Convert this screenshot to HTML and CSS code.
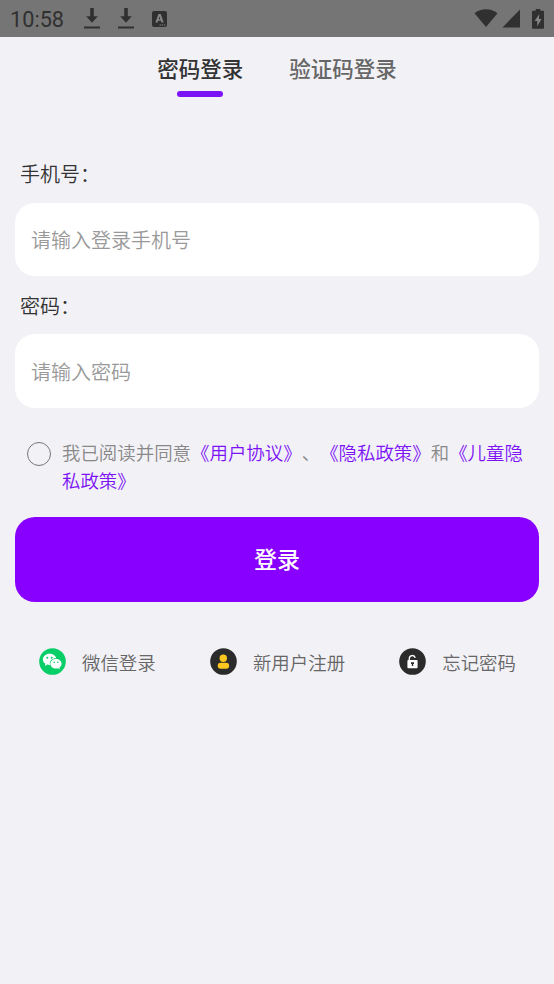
FILE: index.html
```html
<!DOCTYPE html>
<html lang="zh-CN">
<head>
<meta charset="utf-8">
<title>密码登录</title>
<link rel="stylesheet" href="styles.css">
</head>
<body>
<header class="status">
  <span class="clock">10:58</span>
  <svg class="download" width="16" height="21" viewBox="0 0 16 21"><path d="M6.200 0h3.600v8.200h4L8 14.800 2.200 8.200h4zM0 18.600h16v2H0z"/></svg>
  <svg class="download" width="16" height="21" viewBox="0 0 16 21"><path d="M6.200 0h3.600v8.200h4L8 14.800 2.200 8.200h4zM0 18.600h16v2H0z"/></svg>
  <svg class="app" width="15" height="16" viewBox="0 0 15 16"><rect width="15" height="16" rx="2"/><path class="cut" fill-rule="evenodd" d="M6.400 3h2.300l3 8.400H9.500L9 9.800H6.100l-.5 1.600H3.400zM7.500 5.400 6.600 8.200h1.800z"/><path class="cut" d="M7.500 13.400H9v1H7.500zm2.200 0h1.400v1H9.700zm2.200 0h1.400v1h-1.400z"/></svg>
  <div class="system">
    <svg width="24" height="19" viewBox="0 0 24 19"><path d="M.5 4.200C7-1.200 17-1.200 23.500 4.200L12 18z"/></svg>
    <svg width="18" height="19" viewBox="0 0 18 19"><path d="M18 .5v18H.5z"/></svg>
    <svg width="12" height="20" viewBox="0 0 12 20"><path d="M3.700 0h4.600v1.800H11q1 0 1 1v16q0 1-1 1H1q-1 0-1-1v-16q0-1 1-1h2.700z"/><path class="cut" d="M7.300 4.900 2.600 12h2.700v5.200L9.500 10H6.900z"/></svg>
  </div>
</header>
<main>
  <nav class="tabs">
    <a class="tab active">密码登录</a>
    <a class="tab">验证码登录</a>
  </nav>
  <form class="form">
    <label class="label" for="phone">手机号：</label>
    <input class="field" id="phone" type="tel" placeholder="请输入登录手机号">
    <label class="label second" for="password">密码：</label>
    <input class="field" id="password" type="password" placeholder="请输入密码">
    <div class="agreement">
      <span class="radio"></span>
      <p class="terms">我已阅读并同意<a>《用户协议》</a>、<a>《隐私政策》</a>和<a>《儿童隐私政策》</a></p>
    </div>
    <button class="submit" type="button">登录</button>
  </form>
  <footer class="links">
    <a class="link">
      <svg width="27" height="27" viewBox="0 0 27 27"><circle cx="13.5" cy="13.5" r="13.3" fill="#08ce67"/><path fill="#fff" d="M10.600 5.800c-3.800 0-6.700 2.500-6.700 5.600 0 1.800 1 3.300 2.500 4.400l-.6 2.100 2.400-1.300c.8.2 1.600.4 2.400.4h.5c-.2-.5-.3-1-.3-1.500 0-2.900 2.700-5.200 6-5.200h.5c-.6-2.600-3.400-4.500-6.700-4.500z"/><path fill="#fff" d="M17 11c-3.100 0-5.600 2.100-5.600 4.800s2.500 4.800 5.600 4.800c.7 0 1.400-.1 2-.3l1.900 1-.5-1.700c1.300-.9 2.200-2.200 2.200-3.800C22.600 13.100 20.100 11 17 11z"/><g fill="#08ce67"><circle cx="8.300" cy="9.800" r="1"/><circle cx="12.700" cy="9.800" r="1"/><circle cx="15.200" cy="14.200" r=".8"/><circle cx="18.800" cy="14.200" r=".8"/></g></svg>
      <span>微信登录</span>
    </a>
    <a class="link">
      <svg width="27" height="27" viewBox="0 0 27 27"><circle cx="13.5" cy="13.5" r="13.3" fill="#2b2b2b"/><g fill="#fec71d"><circle cx="13.300" cy="10.200" r="3.700"/><rect x="7.700" y="14.800" width="11.400" height="6" rx="3"/></g></svg>
      <span>新用户注册</span>
    </a>
    <a class="link">
      <svg width="27" height="27" viewBox="0 0 27 27"><circle cx="13.5" cy="13.5" r="13.3" fill="#2b2b2b"/><path d="M10.300 12.500v-2a3 3 0 0 1 5.900-.7" fill="none" stroke="#fff" stroke-width="1.400"/><rect x="8.400" y="12" width="10.200" height="8.200" rx="1" fill="#fff"/><path fill="#2b2b2b" d="M12 14.300h3v1.600h-.8v2h-1.400v-2H12z"/></svg>
      <span>忘记密码</span>
    </a>
  </footer>
</main>
</body>
</html>
```
FILE: styles.css
```css
* { box-sizing: border-box; }
body {
  margin: 0;
  min-height: 984px;
  background: #f2f1f6;
  color: #333;
  font-family: "Noto Sans CJK SC", sans-serif;
  font-weight: 350;
  text-spacing-trim: space-all;
}
.status {
  display: flex;
  align-items: center;
  height: 37px;
  padding: 0 10px;
  background: #757575;
  fill: #303030;
}
.clock {
  width: 74px;
  color: #303030;
  font: 400 21.7px/37px Roboto, sans-serif;
  padding-top: 2px;
}
.download { margin: 0 18px 0 0; }
.cut { fill: #858585; }
.system {
  display: flex;
  align-items: center;
  margin-left: auto;
}
.system svg + svg { margin-left: 4px; }
.system svg:last-child { margin-left: 12px; }
.tabs {
  display: flex;
  justify-content: center;
  gap: 46px;
  height: 60px;
}
.tab {
  display: flex;
  flex-direction: column;
  align-items: center;
  color: #666;
  font-size: 21.5px;
  font-weight: 500;
  line-height: 32px;
  padding-top: 15px;
}
.tab.active { color: #333; }
.tab.active::after {
  content: "";
  width: 46px;
  height: 6px;
  margin-top: 7px;
  border-radius: 3px;
  background: #7c13f5;
}
.form {
  display: flex;
  flex-direction: column;
  padding: 62px 15px 0;
}
.label {
  height: 30px;
  margin: 0 5px 14px;
  font-size: 20px;
  line-height: 30px;
}
.label.second { margin-top: 15px; margin-bottom: 13px; }
.field {
  width: 100%;
  height: 73px;
  padding: 0 16px 1px;
  border: 0;
  border-radius: 20px;
  background: #fff;
  color: #333;
  font: 350 20px "Noto Sans CJK SC", sans-serif;
}
.field::placeholder { color: #999; }
#password { height: 74px; padding-bottom: 0; }
.agreement {
  display: flex;
  gap: 11px;
  padding: 31px 12px 0;
}
.radio {
  flex: none;
  width: 24px;
  height: 24px;
  margin-top: 3px;
  border: 1px solid #777;
  border-radius: 50%;
}
.terms {
  margin: 0;
  color: #888;
  font-size: 18.46px;
  line-height: 27.7px;
}
.terms a { color: #7c13f5; }
.submit {
  height: 85px;
  margin-top: 23px;
  padding: 0 0 3px;
  border: 0;
  border-radius: 20px;
  background: #80f;
  color: #fff;
  font: 500 23px "Noto Sans CJK SC", sans-serif;
}
.links {
  display: flex;
  justify-content: space-between;
  padding: 46px 38px 0 39px;
}
.link {
  display: flex;
  align-items: flex-start;
  gap: 16px;
  color: #666;
  font-size: 18.46px;
  line-height: 28px;
}
```
